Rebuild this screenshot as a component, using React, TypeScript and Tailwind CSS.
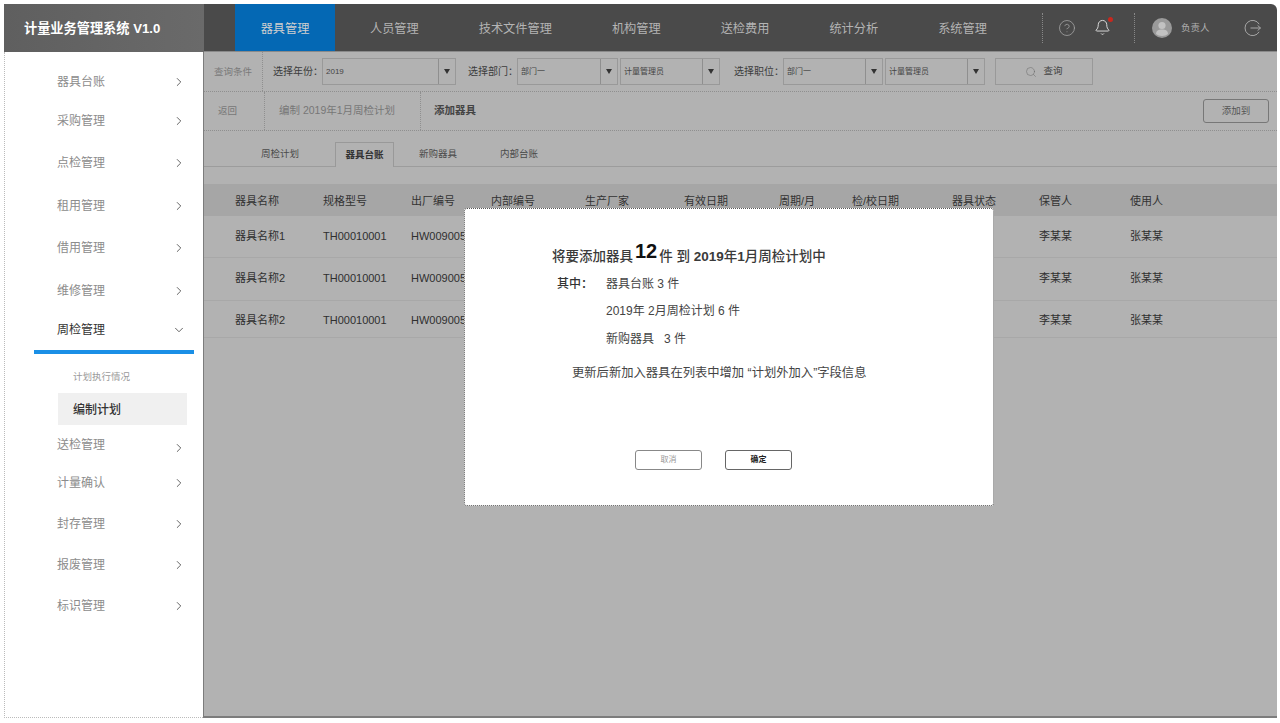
import React from "react";
import { Bell, ChevronDown, ChevronRight, CircleHelp, Search } from "lucide-react";

const font = { fontFamily: '"Liberation Sans", "Noto Sans CJK SC", sans-serif' };

const nav = ["人员管理", "技术文件管理", "机构管理", "送检费用", "统计分析", "系统管理"];

function SideRow({ label, mt, chevronClass = "" }: { label: string; mt: string; chevronClass?: string }) {
  return (
    <div className={`${mt} ml-[52px] flex h-5 w-[129px] items-center justify-between text-[12px] text-[#8c8c8c]`}>
      <span>{label}</span>
      <ChevronRight size={14} strokeWidth={1.4} className={`text-[#444] ${chevronClass}`} />
    </div>
  );
}

function Select({ value, w }: { value: string; w: string }) {
  return (
    <div className={`${w} flex h-[27px] items-stretch border border-[#999] text-[8px] text-[#444]`}>
      <span className="flex flex-1 items-center pl-[3px]">{value}</span>
      <span className="flex w-[17px] items-center justify-center border-l border-[#8f8f8f]">
        <svg width="6" height="5" viewBox="0 0 6 5">
          <polygon points="0,0 6,0 3,5" fill="#333" />
        </svg>
      </span>
    </div>
  );
}

function Row({ name, h, shift }: { name: string; h: string; shift?: string }) {
  return (
    <div className={`${h} ${shift ?? ""} grid grid-cols-[88px_88px_80px_94px_99px_95px_73px_100px_87px_91px_1fr] items-center border-b border-[#a8a8a8] pl-[31px] text-[11px] text-[#2f2f2f]`}>
      <span>{name}</span>
      <span>TH00010001</span>
      <span>HW009005</span>
      <span /><span /><span /><span /><span /><span />
      <span>李某某</span>
      <span>张某某</span>
    </div>
  );
}

export default function App() {
  return (
    <div style={font} className="h-[723px] w-[1280px] overflow-hidden bg-white pb-[5px] pl-1 pr-[3px] pt-1">
      <div className="relative flex h-full flex-col">
        {/* header */}
        <header className="flex h-[48px] shrink-0">
          <div className="flex w-[200px] shrink-0 items-center whitespace-nowrap bg-gradient-to-r from-[#5f5f5f] to-[#6a6a6a] pl-5 pt-px text-[13.2px] font-bold text-white">
            计量业务管理系统 V1.0
          </div>
          <div className="flex min-w-0 flex-1 items-stretch whitespace-nowrap rounded-tr-[6px] border-b border-[#8a8a8a] bg-[#4a4a4a] pl-[31px]">
            <div className="flex shrink-0 items-center gap-[10px] self-stretch text-[12.2px] text-[#b4b4b4]">
              <div className="flex h-full w-[100px] shrink-0 items-center justify-center bg-[#0468b4] pt-[3px] text-[#cfcfcf]">器具管理</div>
              {nav.map((n) => (
                <div key={n} className="flex h-full shrink-0 items-center px-[25px] pt-[3px]">{n}</div>
              ))}
            </div>
            <div className="ml-[30px] flex shrink-0 items-center text-[#bdbdbd]">
              <div className="h-[30px] border-l border-dotted border-[#888]" />
              <CircleHelp size={18} strokeWidth={1} className="ml-[15px] text-[#a8a8a8]" />
              <div className="relative ml-[18px]">
                <Bell size={17} strokeWidth={1.3} className="text-[#e4e4e4]" />
                <span className="absolute -right-[2px] -top-[2px] h-[5px] w-[5px] rounded-full bg-[#c8281e]" />
              </div>
              <div className="ml-[23px] h-[30px] border-l border-dotted border-[#888]" />
              <svg width="20" height="20" viewBox="0 0 20 20" className="ml-[17px]">
                <circle cx="10" cy="10" r="10" fill="#9a9a9a" />
                <circle cx="10" cy="7.5" r="3.6" fill="#c2c2c2" />
                <path d="M4 16c0-3.5 2.5-4.6 6-4.6s6 1.1 6 4.6c-1.6 1.3-3.6 2-6 2s-4.4-.7-6-2z" fill="#c2c2c2" />
              </svg>
              <span className="ml-[9px] pt-[2px] text-[9.5px] text-[#b0b0b0]">负责人</span>
              <svg width="18" height="18" viewBox="0 0 18 18" fill="none" stroke="#a6a6a6" strokeWidth="1" className="ml-[35px]">
                <path d="M15.2 5.2A7.6 7.6 0 1 0 15.2 12.8" />
                <path d="M6.5 9H16.5M13.6 6.4 16.5 9l-2.9 2.6" />
              </svg>
            </div>
          </div>
        </header>

        <div className="flex min-h-0 flex-1">
          {/* sidebar */}
          <aside className="w-[199px] shrink-0 border-b border-l border-dotted border-[#bbb] bg-white">
            <SideRow label="器具台账" mt="mt-[20px]" />
            <SideRow label="采购管理" mt="mt-[19px]" />
            <SideRow label="点检管理" mt="mt-[22px]" />
            <SideRow label="租用管理" mt="mt-[23px]" />
            <SideRow label="借用管理" mt="mt-[22px]" />
            <SideRow label="维修管理" mt="mt-[23px]" />
            <div className="ml-[52px] mt-[19px] flex h-5 w-[129px] items-center justify-between text-[12px] text-[#333]">
              <span>周检管理</span>
              <ChevronDown size={14} strokeWidth={1.4} className="text-[#444]" />
            </div>
            <div className="ml-[29px] mt-[10px] h-1 w-[160px] bg-[#1a8fe6]" />
            <div className="ml-[68px] mt-[13px] flex h-5 items-center text-[9.5px] text-[#9a9a9a]">计划执行情况</div>
            <div className="ml-[53px] mt-[6px] flex h-8 w-[129px] items-center bg-[#f0f0f0] pl-[15px] pt-px text-[12px] font-medium text-[#333]">编制计划</div>
            <SideRow label="送检管理" mt="mt-[10px]" chevronClass="translate-y-[3px]" />
            <SideRow label="计量确认" mt="mt-[18px]" />
            <SideRow label="封存管理" mt="mt-[21px]" />
            <SideRow label="报废管理" mt="mt-[21px]" />
            <SideRow label="标识管理" mt="mt-[21px]" />
          </aside>

          {/* main */}
          <main className="min-w-0 flex-1 border-b-2 border-l border-[#7c7c7c] bg-[#b2b2b2]">
            <div className="flex h-10 items-center border-b border-dotted border-[#8f8f8f] text-[10px] text-[#3c3c3c]">
              <span className="w-[59px] self-stretch border-r border-dotted border-[#8f8f8f] pl-[10px] text-[9.5px] leading-[40px] text-[#7a7a7a]">查询条件</span>
              <span className="ml-[10px]">选择年份：</span>
              <span className="ml-[-1px]"><Select value="2019" w="w-[134px]" /></span>
              <span className="ml-3">选择部门：</span>
              <span className="ml-[-1px]"><Select value="部门一" w="w-[101px]" /></span>
              <span className="ml-[2px]"><Select value="计量管理员" w="w-[100px]" /></span>
              <span className="ml-[14px]">选择职位：</span>
              <span className="ml-[-1px]"><Select value="部门一" w="w-[100px]" /></span>
              <span className="ml-[2px]"><Select value="计量管理员" w="w-[100px]" /></span>
              <div className="ml-[10px] flex h-[27px] w-[98px] items-center justify-center gap-[6px] border border-[#999] text-[9.5px] text-[#444]">
                <Search size={12} strokeWidth={1} className="text-[#666]" />
                查询
              </div>
            </div>

            <div className="flex h-[39px] items-stretch border-b border-dotted border-[#8f8f8f] text-[#777]">
              <span className="flex w-[61px] items-center border-r border-dotted border-[#8f8f8f] pl-[14px] text-[9.5px]">返回</span>
              <span className="flex w-[156px] items-center border-r border-dotted border-[#8f8f8f] pl-[14px] text-[10.5px]">编制 2019年1月周检计划</span>
              <span className="flex items-center pl-[13px] text-[10.5px] font-bold text-[#444]">添加器具</span>
              <div className="ml-auto mr-2 flex items-center">
                <span className="flex h-6 w-[66px] items-center justify-center rounded-[3px] border border-[#777] text-[9.5px] text-[#555]">添加到</span>
              </div>
            </div>

            <div className="flex h-[36px] items-end border-b border-[#9c9c9c] pl-[57px] text-[9.5px] text-[#4a4a4a]">
              <span className="mb-[5px]">周检计划</span>
              <span className="relative top-px ml-[36px] flex h-[25px] w-[59px] items-center justify-center border border-b-0 border-[#999] bg-[#b2b2b2] font-bold text-[#333]">器具台账</span>
              <span className="mb-[5px] ml-[25px]">新购器具</span>
              <span className="mb-[5px] ml-[43px]">内部台账</span>
            </div>

            <div className="mt-[17px] grid h-8 grid-cols-[88px_88px_80px_94px_99px_95px_73px_100px_87px_91px_1fr] items-center bg-[#a6a6a6] pl-[31px] pt-[2px] text-[11px] text-[#333]">
              {["器具名称", "规格型号", "出厂编号", "内部编号", "生产厂家", "有效日期", "周期/月", "检/校日期", "器具状态", "保管人", "使用人"].map((h) => (
                <span key={h}>{h}</span>
              ))}
            </div>
            <Row name="器具名称1" h="h-[42px]" />
            <Row name="器具名称2" h="h-[43px]" shift="pb-[2px]" />
            <Row name="器具名称2" h="h-[37px]" shift="pt-[3px]" />
          </main>
        </div>

        {/* modal */}
        <div className="absolute left-[460px] top-[204px] h-[298px] w-[530px] rounded-[3px] border border-dotted border-[#555] bg-white text-[#444]">
          <div className="ml-[87px] mt-[30px] flex h-[28px] items-end whitespace-nowrap text-[13.5px] font-medium text-[#3a3a3a]">
            <span>将要添加器具</span>
            <span className="relative top-[-3px] mx-[2px] text-[20px] font-bold leading-[26px] text-[#111]">12</span>
            <span>件 到 <span className="font-semibold">2019</span>年<span className="font-semibold">1</span>月周检计划中</span>
          </div>
          <div className="mt-[7px] flex h-5 items-center text-[12px]">
            <span className="ml-[92px] w-[49px] font-medium text-[#333]">其中：</span>
            <span>器具台账 3 件</span>
          </div>
          <div className="ml-[141px] mt-[7px] flex h-5 items-center text-[12px]">2019年 2月周检计划 6 件</div>
          <div className="ml-[141px] mt-[8px] flex h-5 items-center text-[12px]">新购器具&nbsp;&nbsp; 3 件</div>
          <div className="ml-[107px] mt-[14px] flex h-5 items-center whitespace-nowrap text-[12.3px]">更新后新加入器具在列表中增加 “计划外加入”字段信息</div>
          <div className="ml-[170px] mt-[67px] flex gap-[23px]">
            <span className="flex h-5 w-[67px] items-center justify-center rounded-[3px] border border-[#888] text-[8px] text-[#999]">取消</span>
            <span className="flex h-5 w-[67px] items-center justify-center rounded-[3px] border border-[#666] text-[8px] font-bold text-[#222]">确定</span>
          </div>
        </div>
      </div>
    </div>
  );
}
